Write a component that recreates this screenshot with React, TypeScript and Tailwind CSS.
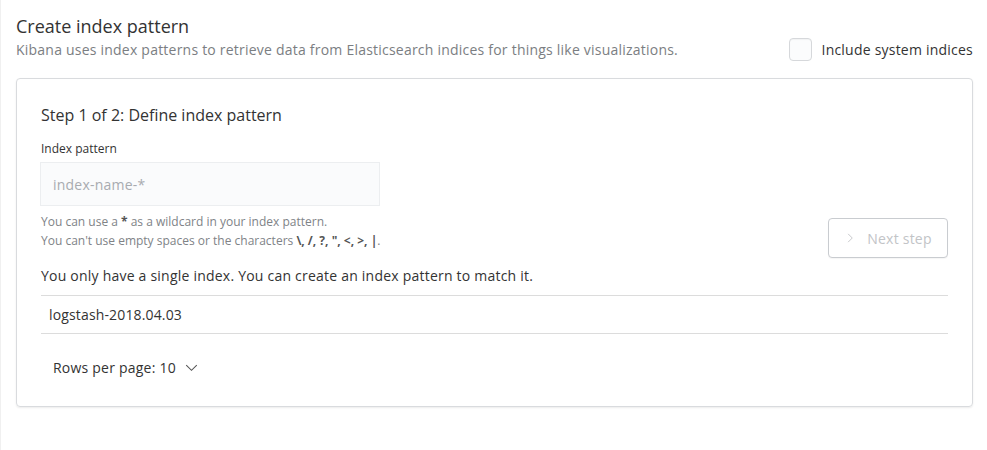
import React from "react";

function ChevronRight({ className }: { className?: string }) {
  return (
    <svg className={className} width="12" height="12" viewBox="0 0 16 16" fill="none">
      <path d="M5.5 2.5 11 8l-5.5 5.5" stroke="currentColor" strokeWidth="1.2" />
    </svg>
  );
}

function ChevronDown({ className }: { className?: string }) {
  return (
    <svg className={className} width="13" height="13" viewBox="0 0 16 16" fill="none">
      <path d="M1.5 5 8 11.5 14.5 5" stroke="currentColor" strokeWidth="1.3" />
    </svg>
  );
}

export default function App() {
  return (
    <div
      className="w-[987px] h-[450px] bg-white pl-4 pr-[14px] pt-[13px] text-[#343741] shadow-[inset_1px_0_0_#f0f0f0]"
      style={{ fontFamily: '"Open Sans", "DejaVu Sans", sans-serif' }}
    >
      <div className="flex justify-between items-end">
        <div>
          <h1 className="text-[18px] leading-[26px] font-normal text-[#333]">Create index pattern</h1>
          <p className="text-[14px] leading-[20px] tracking-[0.22px] text-[#7b7e82] mt-[1px]">
            Kibana uses index patterns to retrieve data from Elasticsearch indices for things like visualizations.
          </p>
        </div>
        <label className="flex items-center gap-[10px] mb-[-1px]">
          <span className="w-[23px] h-[23px] rounded-[4px] border border-[#d6d8db] bg-[#fbfcfd] shadow-[inset_0_1px_1px_rgba(0,0,0,0.04)]" />
          <span className="text-[14px] leading-[20px] tracking-[0.22px] text-[#333]">Include system indices</span>
        </label>
      </div>

      <div className="mt-[18px] border border-[#d9dbde] rounded-[4px] shadow-[0_1px_2px_rgba(0,0,0,0.08)] p-6 pb-[23px]">
        <h2 className="text-[16px] leading-[24px] font-normal text-[#333]">Step 1 of 2: Define index pattern</h2>

        <div className="flex justify-between items-start mt-[13px]">
          <div>
            <div className="text-[12px] leading-[18px] text-[#333]">Index pattern</div>
            <div className="mt-[4px] ml-[-1px] w-[340px] h-[44px] bg-[#fafbfc] border border-[#eceef0] flex items-center pl-[12px] pr-3">
              <span className="text-[14px] tracking-[0.22px] text-[#a8abb0]">index-name-*</span>
            </div>
            <div className="mt-[6px] text-[12px] leading-[19px] text-[#808387]">
              <div>You can use a <b className="font-bold text-[#555]">*</b> as a wildcard in your index pattern.</div>
              <div>
                You can't use empty spaces or the characters <b className="font-bold text-[#555]">\, /, ?, ", &lt;, &gt;, |</b>.
              </div>
            </div>
          </div>
          <button
            disabled
            className="mt-[78px] w-[120px] h-[40px] rounded-[4px] border border-[#c9ccd0] bg-white flex items-center justify-center gap-[11px] text-[#c2c4c7] text-[14px] tracking-[0.22px] shadow-[0_1px_1px_rgba(0,0,0,0.04)]"
          >
            <ChevronRight />
            <span>Next step</span>
          </button>
        </div>

        <p className="mt-[8px] text-[14px] leading-[20px] tracking-[0.22px] text-[#333]">
          You only have a single index. You can create an index pattern to match it.
        </p>

        <div className="mt-[9px] border-t border-b border-[#dcdcdc]">
          <div className="h-[37px] flex items-center pl-[8px] text-[14px] tracking-[0.15px] text-[#333]">logstash-2018.04.03</div>
        </div>

        <div className="mt-[17px] h-[32px] flex items-center pl-[12px]">
          <button className="flex items-center gap-[9px] text-[14px] tracking-[0.22px] text-[#333]">
            <span>Rows per page: 10</span>
            <ChevronDown className="text-[#555]" />
          </button>
        </div>
      </div>
    </div>
  );
}
